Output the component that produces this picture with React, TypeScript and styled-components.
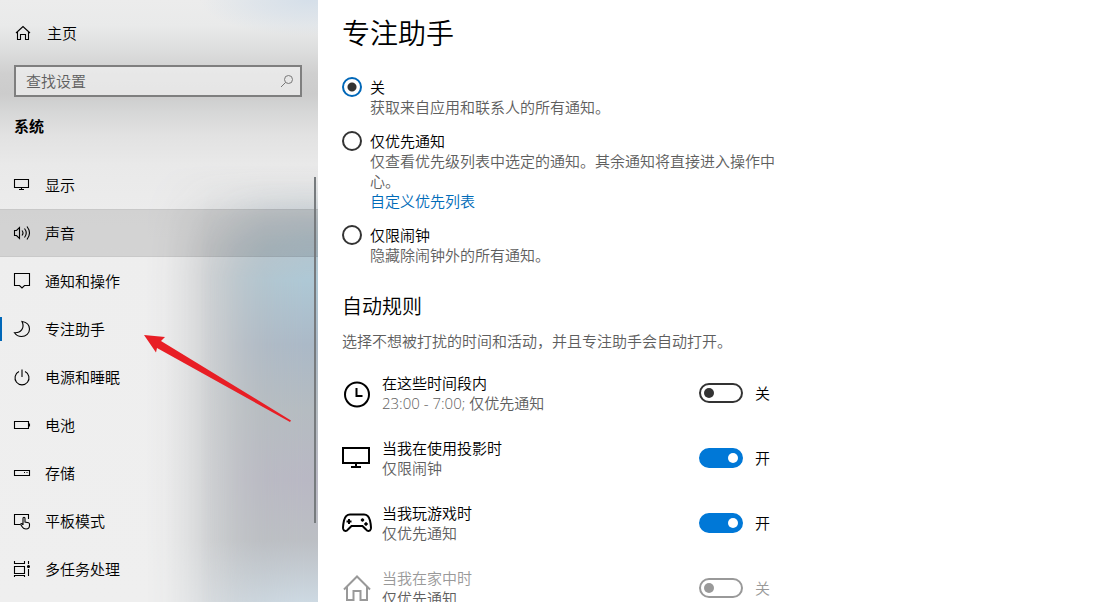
import React from "react";
import styled, { createGlobalStyle } from "styled-components";

const GlobalStyle = createGlobalStyle`
  *, *::before, *::after { box-sizing: border-box; }
  body {
    margin: 0;
    background: #fff;
    color: #000;
    font-family: "Open Sans", "Noto Sans CJK SC", sans-serif;
    font-size: 15px;
    font-weight: 350;
    line-height: 20px;
  }
  h1, h2, p, ul { margin: 0; padding: 0; font-weight: inherit; }
  input { margin: 0; }
  svg { display: block; flex: none; }
`;

const Window = styled.div`
  position: relative;
  display: flex;
  height: 100vh;
  overflow: hidden;
`;

const Sidebar = styled.aside`
  position: relative;
  isolation: isolate;
  flex: none;
  width: 318px;
  background:
    radial-gradient(ellipse 110px 36px at 310px 0, #d5dfe9, #d5dfe990 50%, #d5dfe900),
    linear-gradient(#ececec 0, #e9eaea 26px, #dedfdf 48px, #cfcfcf 74px, #cccccc 94px, #d6d7d7 112px, #e2e2e2 136px, #e9e9e9 165px, #eeeeee 240px, #efefef);

  &::before,
  &::after {
    content: "";
    position: absolute;
    z-index: -1;
    inset: 0;
    mask-composite: intersect;
  }

  &::before {
    background: linear-gradient(#bcbfc2 540px, #c8ced3 602px);
    mask-image:
      linear-gradient(90deg, #0000 145px, #0001 165px, #0004 185px, #0009 210px, #000c 235px, #000 265px),
      linear-gradient(#0000 165px, #0003 195px, #0009 220px, #000d 245px, #000 275px);
  }

  &::after {
    background: linear-gradient(#b3c4ce 200px, #aec8d5 280px, #abb9c7 345px, #b5bcc1 410px, #b9b8c4 480px, #bcbfc4 540px, #cdd9e2 602px);
    mask-image:
      linear-gradient(90deg, #0000 200px, #0003 225px, #0008 250px, #000c 275px, #000 305px),
      linear-gradient(#0000 180px, #0005 215px, #000a 240px, #000 280px);
  }
`;

const HomeLink = styled.a`
  display: flex;
  align-items: center;
  gap: 15px;
  margin-top: 13px;
  padding: 0 14px;
  height: 40px;
  color: inherit;
  text-decoration: none;
`;

const SearchBox = styled.div`
  display: flex;
  align-items: center;
  height: 32px;
  margin: 12px 16px 0 14px;
  padding: 0 6px 0 10px;
  border: 2px solid #7f7f7f;
  background: #ffffff80;
  color: #777;
`;

const SearchInput = styled.input`
  flex: 1;
  min-width: 0;
  padding: 0;
  border: 0;
  outline: 0;
  background: none;
  font: inherit;
  color: #000;
  &::placeholder { color: #5e5e5e; opacity: 1; }
`;

const Category = styled.h2`
  margin: 19px 14px 25px;
  && { font-weight: 700; }
  font-size: 15px;
  line-height: 20px;
`;

const Nav = styled.nav`
  position: relative;
`;

const NavList = styled.ul`
  list-style: none;
`;

const NavLink = styled.a<{ $hovered?: boolean; $active?: boolean }>`
  display: flex;
  align-items: center;
  gap: 14px;
  height: 48px;
  padding-left: 13px;
  background: ${(p) =>
    p.$active
      ? "linear-gradient(#0067b8, #0067b8) left center / 2px 24px no-repeat"
      : p.$hovered
        ? "#0000001c"
        : "none"};
  box-shadow: ${(p) => (p.$hovered ? "inset 0 1px #0000000c, inset 0 -1px #0000000c" : "none")};
  color: inherit;
  text-decoration: none;
`;

const ScrollThumb = styled.div`
  position: absolute;
  top: 16px;
  right: 2px;
  width: 2px;
  height: 346px;
  background: #777b7e;
`;

const Main = styled.main`
  flex: 1;
  min-width: 0;
  padding: 13px 24px 0;
  overflow: hidden;
`;

const Column = styled.div`
  max-width: 434px;
`;

const Title = styled.h1`
  font-size: 28px;
  line-height: 40px;
`;

const Options = styled.div`
  display: grid;
  gap: 14px;
  margin-top: 24px;
`;

const Option = styled.div`
  display: grid;
  grid-template-columns: 20px 1fr;
  column-gap: 8px;
`;

const OptionBody = styled.div`
  grid-column: 2;
`;

const Radio = styled.input`
  appearance: none;
  width: 20px;
  height: 20px;
  border: 2px solid #333;
  border-radius: 50%;
  background: #fff;
  &:checked {
    border-color: #0067b8;
    background: radial-gradient(circle, #333 4px, #fff 5px);
  }
`;

const Muted = styled.p`
  color: #5e5e5e;
`;

const Link = styled.a`
  display: block;
  width: max-content;
  color: #006bb8;
  text-decoration: none;
`;

const SectionTitle = styled.h2`
  margin: 28px 0 10px;
  font-size: 20px;
  line-height: 28px;
`;

const Rules = styled.div`
  display: grid;
  gap: 25px;
  margin-top: 22px;
`;

const Rule = styled.div`
  display: flex;
  align-items: center;
  gap: 10px;
`;

const RuleText = styled.div`
  flex: 1;
  min-width: 0;
`;

const RuleName = styled.p<{ $off?: boolean }>`
  color: ${(p) => (p.$off ? "#999" : "#000")};
`;

const SwitchLabel = styled.label<{ $off?: boolean }>`
  display: flex;
  align-items: center;
  gap: 12px;
  width: 77px;
  color: ${(p) => (p.$off ? "#999" : "#000")};
`;

const Switch = styled.input`
  appearance: none;
  display: flex;
  align-items: center;
  width: 44px;
  height: 20px;
  padding: 0 3px;
  border: 2px solid #333;
  border-radius: 10px;
  &::before {
    content: "";
    width: 10px;
    height: 10px;
    border-radius: 50%;
    background: #333;
  }
  &:checked {
    justify-content: flex-end;
    border-color: #0078d7;
    background: #0078d7;
  }
  &:checked::before { background: #fff; }
  &:disabled { border-color: #999; }
  &:disabled::before { background: #999; }
`;

const Arrow = styled.svg`
  position: absolute;
  left: 144px;
  top: 334px;
`;

const Glyph = ({ children }: { children: React.ReactNode }) => (
  <svg width="18" height="18" viewBox="0 0 18 18" fill="none" stroke="#000" strokeWidth="1.1" aria-hidden="true">
    {children}
  </svg>
);

const RuleGlyph = ({ children, color = "#000" }: { children: React.ReactNode; color?: string }) => (
  <svg width="30" height="30" viewBox="0 0 30 30" fill="none" stroke={color} strokeWidth="2" aria-hidden="true">
    {children}
  </svg>
);

const navItems = [
  { label: "显示", icon: <path d="M1.5 3.5h14v8h-14zM8.5 11.5v2M6 13.5h5" /> },
  {
    label: "声音",
    hovered: true,
    icon: <path d="M1.5 6.5h2l3-3v11l-3-3h-2zM9 6.5q2 2.5 0 5M11.5 4.5q3.500 4.500 0 9M14 2.500q5 6.500 0 13" />,
  },
  { label: "通知和操作", icon: <path d="M1.500 1.500h15v12h-5L9 16l-2.500-2.500h-5z" /> },
  {
    label: "专注助手",
    active: true,
    icon: <path d="M9 1.500C14 2.300 16.500 5.500 16.500 9c0 4.500-3.500 7.500-8 7.500-3 0-5.500-1.500-7-3.800C8 13 12 8 9 1.500z" />,
  },
  { label: "电源和睡眠", icon: <path d="M9 1.500v7.500M6 3.600a7 7 0 1 0 6 0" /> },
  { label: "电池", icon: <path d="M1.500 5.500h14v7h-14zM16.500 7.500v3" /> },
  { label: "存储", icon: <path d="M1.500 6.500h15v5h-15zM11 8.500h1M13.500 8.500h1" /> },
  {
    label: "平板模式",
    icon: (
      <path d="M7 12.500H1.500v-10h14v4.500M10 13V6.500q0-1.200 1-1.200t1 1.200V10l3.500.8q1 .3 1 1.400v1.300q0 3.500-3.500 3.500-2.500 0-3.500-1.700L7.700 12.500q0-1.300 1.200-.8L10 13" />
    ),
  },
  {
    label: "多任务处理",
    icon: (
      <>
        <path d="M1.500 1v2.500h10V1M1.500 6.500h10v7h-10zM1.500 17v-1.500h10V17M15.500 1v3M15.500 9v7" />
        <circle cx="15.500" cy="6.500" r="1" fill="#000" />
      </>
    ),
  },
];

const rules = [
  {
    id: "time",
    name: "在这些时间段内",
    detail: "23:00 - 7:00; 仅优先通知",
    on: false,
    off: false,
    icon: (
      <RuleGlyph>
        <circle cx="15" cy="16.500" r="12" />
        <path d="M14.500 10v8h6" />
      </RuleGlyph>
    ),
  },
  {
    id: "display",
    name: "当我在使用投影时",
    detail: "仅限闹钟",
    on: true,
    off: false,
    icon: (
      <RuleGlyph>
        <path d="M1 5h26v15H1zM14 20v4M9 24h10" />
      </RuleGlyph>
    ),
  },
  {
    id: "game",
    name: "当我玩游戏时",
    detail: "仅优先通知",
    on: true,
    off: false,
    icon: (
      <RuleGlyph>
        <path d="M8 6.500h14c3.500 0 5 2 6 6 .8 3.500 1.300 6.500.8 8.500-.8 2.500-3.300 2.500-4.800.5L20.500 18h-11L6 21.500c-1.500 2-4 2-4.800-.5-.5-2 0-5 .8-8.500 1-4 2.500-6 6-6z" />
        <path d="M4.500 13.500h5M7 11v5" />
        <circle cx="20.500" cy="12" r="1.300" fill="#000" strokeWidth="1" />
        <circle cx="24" cy="16" r="1.300" fill="#000" strokeWidth="1" />
      </RuleGlyph>
    ),
  },
  {
    id: "home",
    name: "当我在家中时",
    detail: "仅优先通知",
    on: false,
    off: true,
    icon: (
      <RuleGlyph color="#999">
        <path d="M2 16.500L15 3.500l13 13M5 14v13h6.500v-9h7v9H25V14" />
      </RuleGlyph>
    ),
  },
];

export default function App() {
  return (
    <Window>
      <GlobalStyle />
      <Sidebar>
        <HomeLink href="#home">
          <Glyph>
            <path d="M2 9l7-6.500L16 9M3.500 8v7.500h3v-5h5v5h3V8" />
          </Glyph>
          主页
        </HomeLink>
        <SearchBox>
          <SearchInput type="search" aria-label="查找设置" placeholder="查找设置" />
          <svg width="14" height="14" viewBox="0 0 14 14" fill="none" stroke="currentColor" aria-hidden="true">
            <circle cx="8.500" cy="5.500" r="4" />
            <path d="M5.500 8.500L1 13" />
          </svg>
        </SearchBox>
        <Category>系统</Category>
        <Nav>
          <NavList>
            {navItems.map((item) => (
              <li key={item.label}>
                <NavLink
                  href="#settings"
                  $hovered={item.hovered}
                  $active={item.active}
                  aria-current={item.active ? "page" : undefined}
                >
                  <Glyph>{item.icon}</Glyph>
                  {item.label}
                </NavLink>
              </li>
            ))}
          </NavList>
          <ScrollThumb />
        </Nav>
      </Sidebar>
      <Main>
        <Column>
          <Title>专注助手</Title>
          <Options>
            <Option>
              <Radio type="radio" name="focus" id="focus-off" defaultChecked />
              <label htmlFor="focus-off">关</label>
              <OptionBody>
                <Muted>获取来自应用和联系人的所有通知。</Muted>
              </OptionBody>
            </Option>
            <Option>
              <Radio type="radio" name="focus" id="focus-priority" />
              <label htmlFor="focus-priority">仅优先通知</label>
              <OptionBody>
                <Muted>仅查看优先级列表中选定的通知。其余通知将直接进入操作中心。</Muted>
                <Link href="#priority">自定义优先列表</Link>
              </OptionBody>
            </Option>
            <Option>
              <Radio type="radio" name="focus" id="focus-alarms" />
              <label htmlFor="focus-alarms">仅限闹钟</label>
              <OptionBody>
                <Muted>隐藏除闹钟外的所有通知。</Muted>
              </OptionBody>
            </Option>
          </Options>
          <SectionTitle>自动规则</SectionTitle>
          <Muted>选择不想被打扰的时间和活动，并且专注助手会自动打开。</Muted>
          <Rules>
            {rules.map((rule) => (
              <Rule key={rule.id}>
                {rule.icon}
                <RuleText>
                  <RuleName $off={rule.off}>{rule.name}</RuleName>
                  <Muted>{rule.detail}</Muted>
                </RuleText>
                <SwitchLabel $off={rule.off}>
                  <Switch
                    type="checkbox"
                    role="switch"
                    aria-label={rule.name}
                    defaultChecked={rule.on}
                    disabled={rule.off}
                  />
                  {rule.on ? "开" : "关"}
                </SwitchLabel>
              </Rule>
            ))}
          </Rules>
        </Column>
      </Main>
      <Arrow width="148" height="90" viewBox="0 0 148 90" aria-hidden="true">
        <path d="M0 1L21 3L17 7L147 86.500L146 88L13 14L12 18.500z" fill="#e81e25" />
      </Arrow>
    </Window>
  );
}
